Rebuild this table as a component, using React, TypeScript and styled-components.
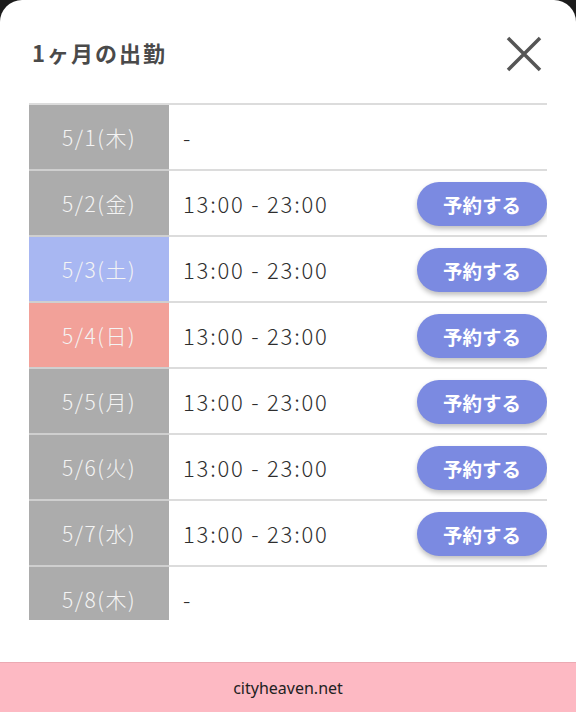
import React from 'react';
import styled, { createGlobalStyle } from 'styled-components';

const GlobalStyle = createGlobalStyle`
  html, body {
    margin: 0;
    padding: 0;
    background: #1c1c1c;
  }
  body {
    font-family: "Noto Sans CJK JP", "Noto Sans", sans-serif;
  }
`;

const Page = styled.div`
  width: 576px;
  height: 712px;
  display: flex;
  flex-direction: column;
  overflow: hidden;
`;

const Sheet = styled.div`
  flex: 1;
  background: #fff;
  border-radius: 22px 22px 0 0;
  display: flex;
  flex-direction: column;
  padding: 0 29px;
`;

const Header = styled.div`
  height: 103px;
  display: flex;
  align-items: center;
  justify-content: space-between;
  box-sizing: border-box;
`;

const Title = styled.h2`
  margin: 0 0 0 3px;
  font-size: 22px;
  font-weight: 700;
  color: #4a4a4a;
  letter-spacing: 2px;
`;

const CloseBtn = styled.button`
  width: 40px;
  height: 40px;
  padding: 0;
  margin: 4px 3px 0 0;
  border: none;
  background: none;
  display: flex;
  align-items: center;
  justify-content: center;
`;

const TableWrap = styled.div`
  height: 515px;
  overflow: hidden;
  border-top: 2px solid #dcdcdc;
`;

const Row = styled.div`
  display: flex;
  height: 66px;
`;

const DateCell = styled.div<{ $day: string }>`
  width: 140px;
  flex-shrink: 0;
  display: flex;
  align-items: center;
  justify-content: center;
  font-size: 21px;
  font-weight: 300;
  letter-spacing: 1.5px;
  color: #f4f4f4;
  background: ${p => (p.$day === '土' ? '#a8b7f2' : p.$day === '日' ? '#f2a199' : '#acacac')};
  border-bottom: 2px solid #cfcfcf;
  box-sizing: border-box;
`;

const TimeCell = styled.div`
  flex: 1;
  display: flex;
  align-items: center;
  justify-content: space-between;
  padding-left: 14px;
  border-bottom: 2px solid #dcdcdc;
  box-sizing: border-box;
`;

const TimeText = styled.span`
  font-size: 22px;
  font-weight: 300;
  letter-spacing: 1.8px;
  color: #2e2e2e;
`;

const ReserveBtn = styled.button`
  width: 130px;
  height: 44px;
  border: none;
  border-radius: 22px;
  background: #7b8ae1;
  color: #fff;
  font-family: inherit;
  font-size: 19.5px;
  font-weight: 700;
  box-shadow: 0 3px 5px rgba(0, 0, 0, 0.25);
  margin-top: 2px;
`;

const Footer = styled.div`
  height: 49px;
  background: #fdb9c3;
  border-top: 1px solid #ecaab3;
  display: flex;
  align-items: center;
  justify-content: center;
  font-family: "Noto Sans", sans-serif;
  font-size: 16px;
  color: #222;
`;

const schedule = [
  { date: '5/1', day: '木', time: '' },
  { date: '5/2', day: '金', time: '13:00 - 23:00' },
  { date: '5/3', day: '土', time: '13:00 - 23:00' },
  { date: '5/4', day: '日', time: '13:00 - 23:00' },
  { date: '5/5', day: '月', time: '13:00 - 23:00' },
  { date: '5/6', day: '火', time: '13:00 - 23:00' },
  { date: '5/7', day: '水', time: '13:00 - 23:00' },
  { date: '5/8', day: '木', time: '' },
];

function App() {
  return (
    <>
      <GlobalStyle />
      <Page>
        <Sheet>
          <Header>
            <Title>1ヶ月の出勤</Title>
            <CloseBtn type="button" aria-label="閉じる">
              <svg width="36" height="36" viewBox="0 0 36 36">
                <path d="M2 2 L34 34 M34 2 L2 34" stroke="#555" strokeWidth="3.5" />
              </svg>
            </CloseBtn>
          </Header>
          <TableWrap>
            {schedule.map(s => (
              <Row key={s.date}>
                <DateCell $day={s.day}>{s.date}({s.day})</DateCell>
                <TimeCell>
                  <TimeText>{s.time || '-'}</TimeText>
                  {s.time && <ReserveBtn type="button">予約する</ReserveBtn>}
                </TimeCell>
              </Row>
            ))}
          </TableWrap>
        </Sheet>
        <Footer>cityheaven.net</Footer>
      </Page>
    </>
  );
}

export default App;
